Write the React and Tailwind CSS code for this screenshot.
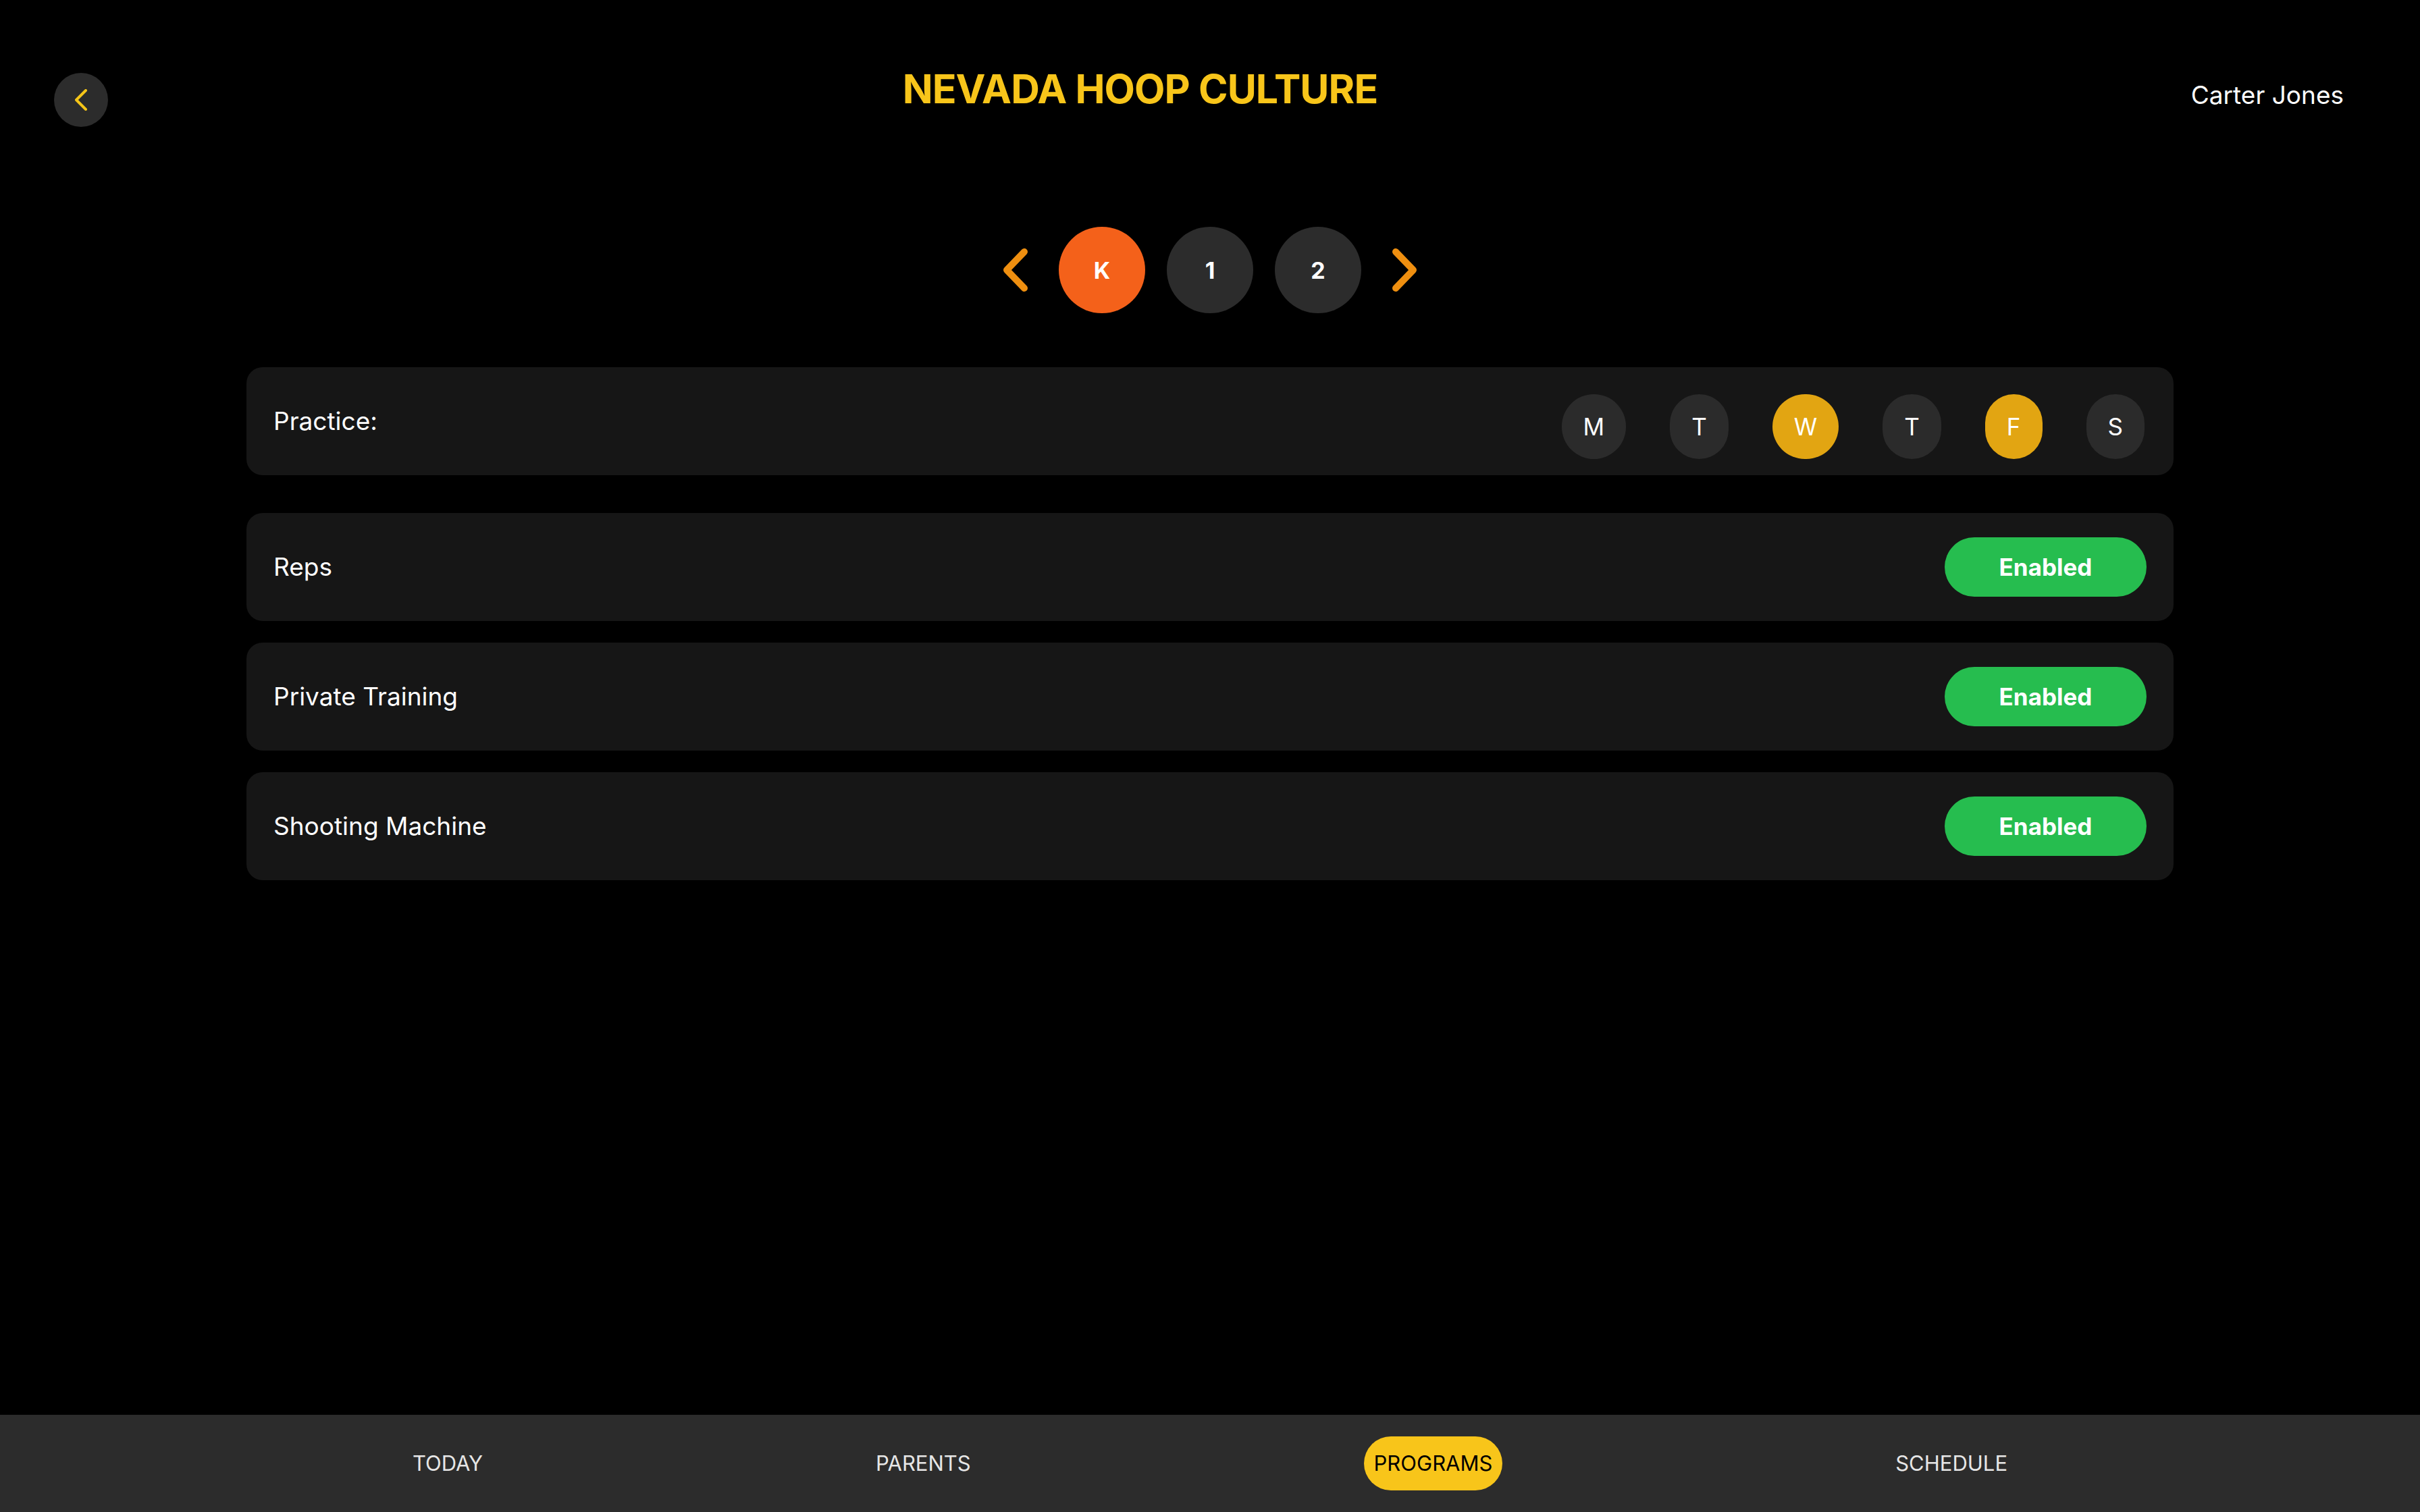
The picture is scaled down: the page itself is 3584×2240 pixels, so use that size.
import React from "react";

const days = [
  { label: "M", on: false },
  { label: "T", on: false },
  { label: "W", on: true },
  { label: "T", on: false },
  { label: "F", on: true },
  { label: "S", on: false },
];

const programs = ["Reps", "Private Training", "Shooting Machine"];

const tabs = ["TODAY", "PARENTS", "PROGRAMS", "SCHEDULE"];

function Chevron({ dir = "left", className }) {
  return (
    <svg viewBox="0 0 36 64" className={className} fill="none">
      <path
        d={dir === "left" ? "M31 5 L5 32 L31 59" : "M5 5 L31 32 L5 59"}
        stroke="currentColor"
        strokeWidth="10"
        strokeLinecap="round"
        strokeLinejoin="round"
      />
    </svg>
  );
}

export default function App() {
  return (
    <div
      className="h-[2240px] w-full bg-black text-white flex flex-col"
      style={{ fontFamily: "Inter, 'Noto Sans', sans-serif" }}
    >
      {/* HEADER */}
      <div className="flex items-start justify-between pl-[80px] pr-[113px] pt-[97px]">
        <button className="mt-[11px] w-[80px] h-[80px] rounded-full bg-[#2c2c2c] flex items-center justify-center">
          <svg viewBox="0 0 18 32" className="w-[18px] h-[32px]" fill="none">
            <path
              d="M16 2 L2 16 L16 30"
              stroke="#f5c518"
              strokeWidth="4"
              strokeLinecap="round"
              strokeLinejoin="round"
            />
          </svg>
        </button>

        <h1 className="text-[59px] leading-[70px] font-bold tracking-[-0.016em] text-[#f8c51a]">
          NEVADA HOOP CULTURE
        </h1>

        <div className="mt-[20px] w-[254px] text-right text-[37px] leading-[48px] text-white">
          Carter Jones
        </div>
      </div>

      {/* LEVEL PAGER */}
      <div className="mt-[148px] flex items-center justify-center">
        <Chevron dir="left" className="w-[36px] h-[64px] text-[#ef8f10]" />
        <div className="flex items-center gap-[32px] mx-[46px]">
          <div className="w-[128px] h-[128px] rounded-full bg-[#f4611a] flex items-center justify-center text-[34px] font-bold">
            K
          </div>
          <div className="w-[128px] h-[128px] rounded-full bg-[#2c2c2c] flex items-center justify-center text-[34px] font-bold">
            1
          </div>
          <div className="w-[128px] h-[128px] rounded-full bg-[#2c2c2c] flex items-center justify-center text-[34px] font-bold">
            2
          </div>
        </div>
        <Chevron dir="right" className="w-[36px] h-[64px] text-[#ef8f10]" />
      </div>

      {/* CARDS */}
      <div className="mt-[80px] w-[2854px] mx-auto">
        <div className="h-[160px] rounded-[24px] bg-[#161616] flex items-center justify-between pl-[40px] pr-[43px]">
          <span className="text-[37px]">Practice:</span>
          <div className="mt-[16px] flex items-center gap-[65px]">
            {days.map((d, i) => (
              <div
                key={i}
                className={`h-[96px] px-[32px] rounded-full flex items-center justify-center text-[35px] ${
                  d.on ? "bg-[#e2a512]" : "bg-[#2b2b2b]"
                }`}
              >
                {d.label}
              </div>
            ))}
          </div>
        </div>

        <div className="mt-[56px] flex flex-col gap-[32px]">
          {programs.map((p) => (
            <div
              key={p}
              className="h-[160px] rounded-[24px] bg-[#161616] flex items-center justify-between pl-[40px] pr-[40px]"
            >
              <span className="text-[37px]">{p}</span>
              <button className="w-[299px] h-[88px] rounded-full bg-[#26bd4f] text-white text-[35px] font-bold">
                Enabled
              </button>
            </div>
          ))}
        </div>
      </div>

      {/* BOTTOM NAV */}
      <div className="mt-auto h-[144px] bg-[#2c2c2c] flex items-center justify-around px-[320px]">
        {tabs.map((t) =>
          t === "PROGRAMS" ? (
            <div
              key={t}
              className="h-[80px] px-[15px] rounded-full bg-[#f8c51a] text-black text-[31px] flex items-center"
            >
              {t}
            </div>
          ) : (
            <div key={t} className="text-[31px] text-[#e6e6e6]">
              {t}
            </div>
          )
        )}
      </div>
    </div>
  );
}
